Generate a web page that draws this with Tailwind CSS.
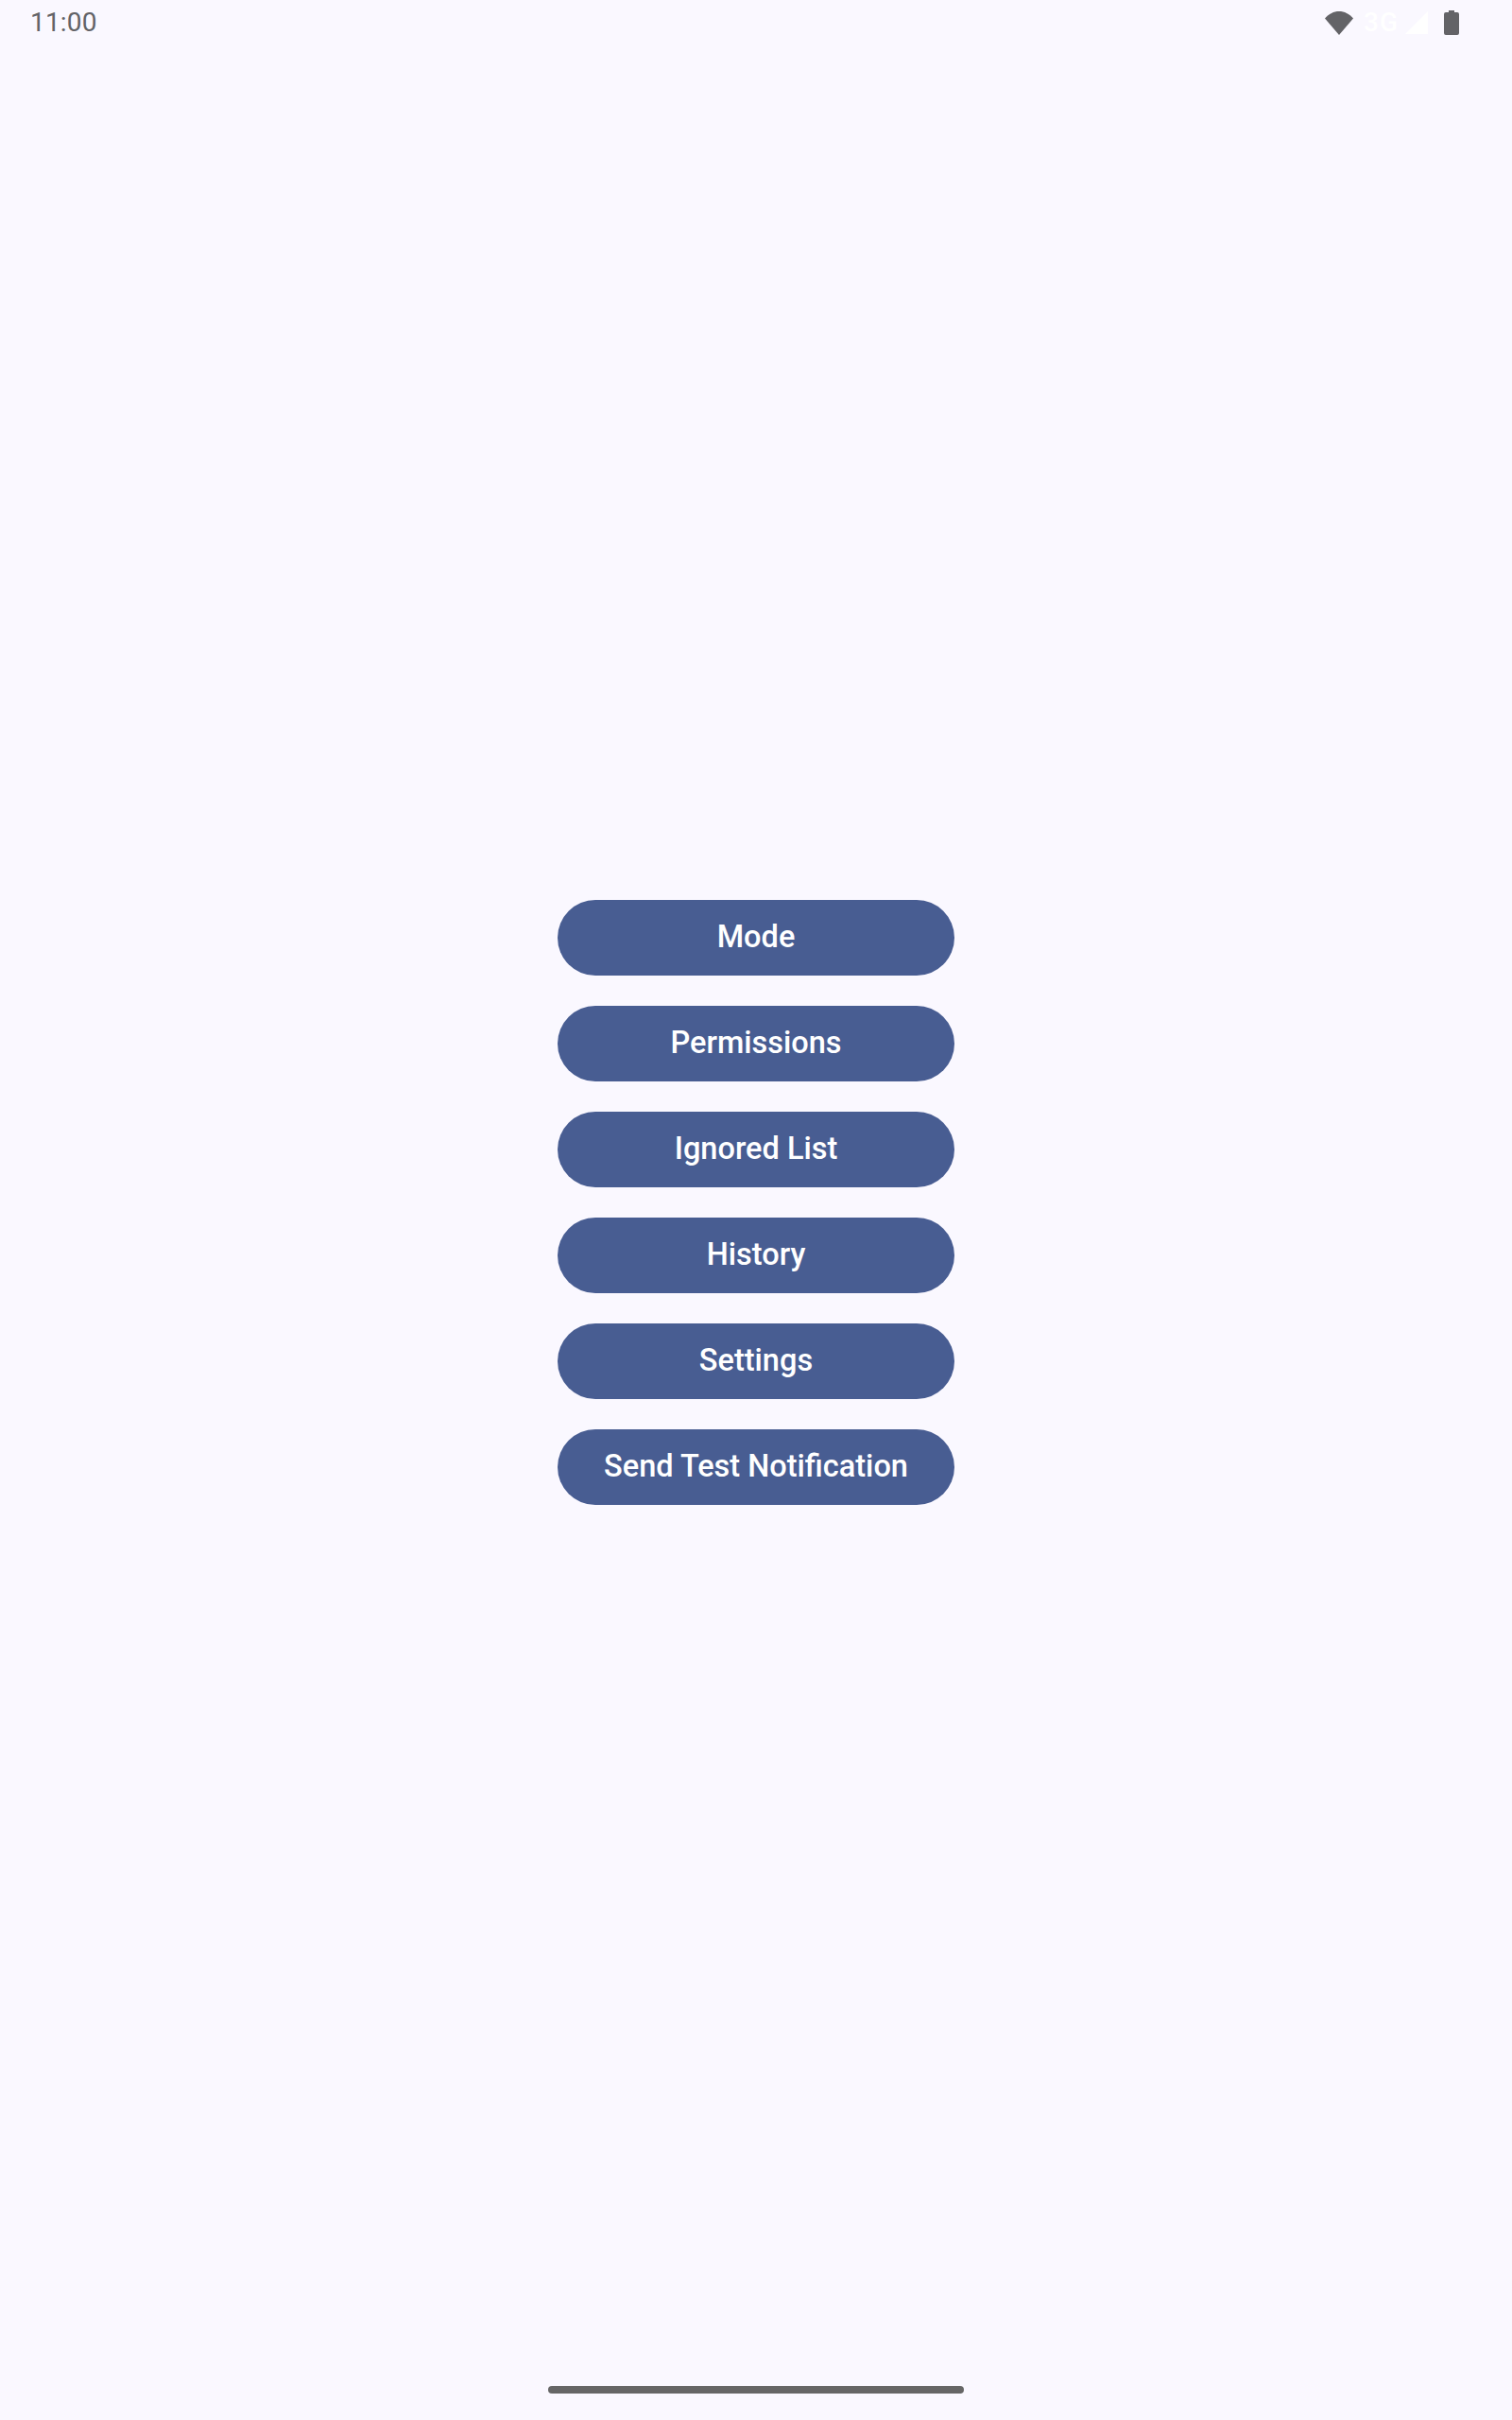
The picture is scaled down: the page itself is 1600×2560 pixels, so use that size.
<!DOCTYPE html>
<html lang="en">
  <head>
    <meta charset="UTF-8" />
    <meta name="viewport" content="width=device-width, initial-scale=1.0" />
    <title>Home</title>
    <script src="https://cdn.jsdelivr.net/npm/@tailwindcss/browser@4"></script>
  </head>
  <body class="bg-[#faf8ff] font-['Roboto',sans-serif]">
    <div class="h-[2560px] flex flex-col">
      <!-- Status bar -->
      <div class="h-12 flex items-center justify-between pl-[32px] pr-[56px]">
        <span class="text-[28px] leading-none text-[#636367] tracking-[0.2px]">11:00</span>
        <div class="flex items-center">
          <svg class="w-[30px] h-[26px]" viewBox="0 0 32 26" preserveAspectRatio="none">
            <path d="M0 8.500C4.500 3.500 10 1 16 1s11.500 2.500 16 7.500L16 26z" fill="#636367" />
          </svg>
          <span class="ml-[11px] text-[28px] leading-none font-medium text-white tracking-[1px]">3G</span>
          <svg class="ml-[6px] w-[26px] h-[26px]" viewBox="0 0 26 26">
            <path d="M25 1v24H1z" fill="#ffffff" />
          </svg>
          <svg class="ml-[16px] w-[16px] h-[26px]" viewBox="0 0 16 26">
            <path d="M5 0h6v2h3a2 2 0 0 1 2 2v20a2 2 0 0 1-2 2H2a2 2 0 0 1-2-2V4a2 2 0 0 1 2-2h3z" fill="#636367" />
          </svg>
        </div>
      </div>

      <!-- Menu -->
      <div class="flex-1 flex flex-col items-center justify-center gap-8">
        <button class="w-[420px] h-20 pb-px rounded-full bg-[#485d92] text-white text-[32.500px] font-medium">Mode</button>
        <button class="w-[420px] h-20 pb-px rounded-full bg-[#485d92] text-white text-[32.500px] font-medium">Permissions</button>
        <button class="w-[420px] h-20 pb-px rounded-full bg-[#485d92] text-white text-[32.500px] font-medium">Ignored List</button>
        <button class="w-[420px] h-20 pb-px rounded-full bg-[#485d92] text-white text-[32.500px] font-medium">History</button>
        <button class="w-[420px] h-20 pb-px rounded-full bg-[#485d92] text-white text-[32.500px] font-medium">Settings</button>
        <button class="w-[420px] h-20 pb-px rounded-full bg-[#485d92] text-white text-[32.500px] font-medium">Send Test Notification</button>
      </div>

      <!-- Gesture bar -->
      <div class="h-16 flex items-center justify-center">
        <div class="w-[440px] h-2 rounded-full bg-[#666666]"></div>
      </div>
    </div>
  </body>
</html>
